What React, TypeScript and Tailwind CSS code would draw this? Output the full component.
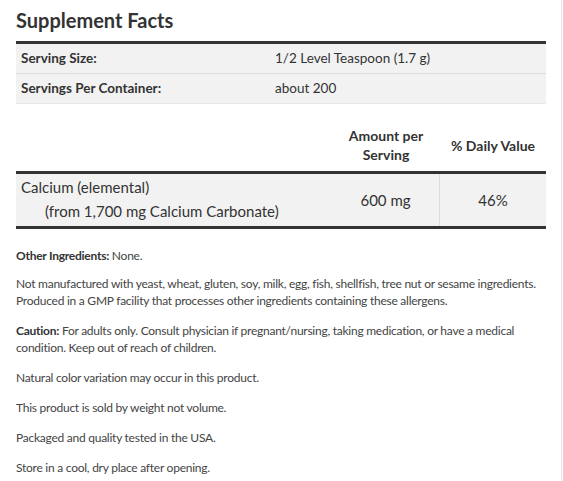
import React from "react";

export default function App() {
  return (
    <div
      className="w-[562px] min-h-[481px] border-r border-[#e6e6e6] bg-white text-[#333]"
      style={{ fontFamily: "Lato, 'Liberation Sans', sans-serif" }}
    >
      <div className="pl-4 pr-4">
        <h2 className="pt-[6px] text-[20px] leading-[28px] font-bold text-[#333]">Supplement Facts</h2>
        <div className="mt-[7px] w-[530px] border-t-[3px] border-[#333]">
          <div className="flex h-[30px] items-center border-b border-[#dcdcdc] bg-[#f2f2f2] text-[13.5px]">
            <div className="w-[259px] pl-[5px] font-bold">Serving Size:</div>
            <div>1/2 Level Teaspoon (1.7 g)</div>
          </div>
          <div className="flex h-[30px] items-center border-b border-[#e6e6e6] bg-[#f2f2f2] text-[13.5px]">
            <div className="w-[259px] pl-[5px] font-bold">Servings Per Container:</div>
            <div>about 200</div>
          </div>
        </div>

        <div className="mt-[22px] w-[530px]">
          <div className="flex items-center pb-[7px] text-[14px] font-bold leading-[19px]">
            <div className="w-[316px]" />
            <div className="w-[108px] text-center">Amount per<br />Serving</div>
            <div className="w-[106px] text-center">% Daily Value</div>
          </div>
          <div className="flex h-[58px] border-y-[3px] border-[#333] bg-[#f2f2f2] text-[15px]">
            <div className="w-[316px] pl-[5px] pt-[1px] leading-[24px]">
              <div>Calcium (elemental)</div>
              <div className="pl-[24px]">(from 1,700 mg Calcium Carbonate)</div>
            </div>
            <div className="flex w-[108px] items-center justify-center border-r border-[#dcdcdc]">600 mg</div>
            <div className="flex w-[106px] items-center justify-center">46%</div>
          </div>
        </div>

        <div className="mt-[18px] text-[12px] leading-[17px] tracking-[-0.25px] text-[#444]">
          <p className="mb-[11px]"><span className="font-bold text-[#333]">Other Ingredients:</span> None.</p>
          <p className="mb-[13px]">Not manufactured with yeast, wheat, gluten, soy, milk, egg, fish, shellfish, tree nut or sesame ingredients. Produced in a GMP facility that processes other ingredients containing these allergens.</p>
          <p className="mb-[13px]"><span className="font-bold text-[#333]">Caution:</span> For adults only. Consult physician if pregnant/nursing, taking medication, or have a medical condition. Keep out of reach of children.</p>
          <p className="mb-[13px]">Natural color variation may occur in this product.</p>
          <p className="mb-[13px]">This product is sold by weight not volume.</p>
          <p className="mb-[13px]">Packaged and quality tested in the USA.</p>
          <p className="mb-[13px]">Store in a cool, dry place after opening.</p>
        </div>
      </div>
    </div>
  );
}
